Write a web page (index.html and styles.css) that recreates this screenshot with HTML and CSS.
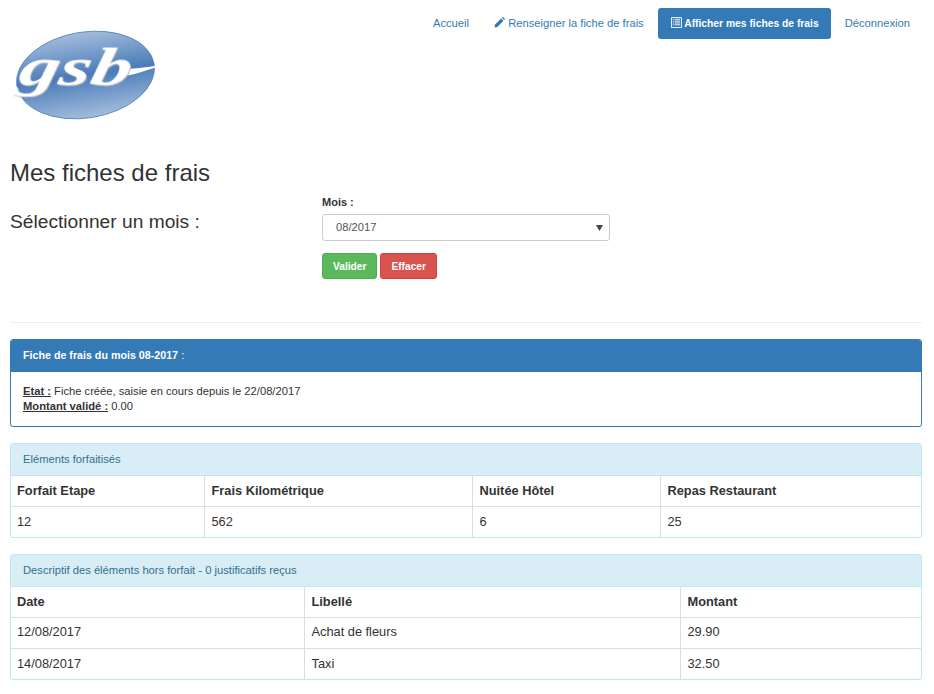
FILE: index.html
```html
<!DOCTYPE html>
<html lang="fr">

<head>
    <meta charset="UTF-8">
    <title>Mes fiches de frais</title>
    <link rel="stylesheet" href="styles.css">
</head>

<body>
    <div class="container">
        <div class="header">
            <ul class="nav-pills">
                <li><a href="#">Accueil</a></li>
                <li>
                    <a href="#">
                        <svg class="icon" viewBox="0 0 12 12">
                            <path d="M0.5 11.5l0.7-3.2 6.6-6.6 2.5 2.5-6.6 6.6z" fill="currentColor" />
                            <path d="M8.6 0.9l0.7-0.6c0.3-0.2 0.6-0.2 0.9 0l1.5 1.5c0.2 0.3 0.2 0.6 0 0.9l-0.6 0.7z" fill="currentColor" />
                        </svg>
                        Renseigner la fiche de frais
                    </a>
                </li>
                <li class="active">
                    <a href="#">
                        <svg class="icon" viewBox="0 0 12 12">
                            <path d="M0.5 0.5h11v11h-11z" fill="none" stroke="currentColor" />
                            <path d="M2 2.5h1.2M4 2.5h6M2 4.5h1.2M4 4.5h6M2 6.5h1.2M4 6.5h6M2 8.5h1.2M4 8.5h6" stroke="currentColor" />
                        </svg>
                        Afficher mes fiches de frais
                    </a>
                </li>
                <li><a href="#">Déconnexion</a></li>
            </ul>
            <svg class="logo" viewBox="0 0 146 94">
                <defs>
                    <linearGradient id="ovale" x1="0" y1="0" x2="0" y2="1">
                        <stop offset="0" stop-color="#a3bcdc" />
                        <stop offset="0.5" stop-color="#4a7cb9" />
                        <stop offset="1" stop-color="#a3bcdc" />
                    </linearGradient>
                </defs>
                <ellipse cx="72.5" cy="48" rx="69.5" ry="43" fill="url(#ovale)" stroke="#4f7fb8" stroke-width="0.8" transform="rotate(-9 72.5 48)" />
                <path class="logo-swoosh" d="M108 49c12 0 24-6 37-9l-3-1c-10 1-21 3-34 3z" />
                <text class="logo-text" x="16" y="58" textLength="112" lengthAdjust="spacingAndGlyphs" transform="skewX(-12)">gsb</text>
            </svg>
        </div>

        <h2 class="page-title">Mes fiches de frais</h2>

        <div class="select-row">
            <h3>Sélectionner un mois :</h3>
            <form class="month-form">
                <label for="lstMois">Mois :</label>
                <select id="lstMois">
                    <option>08/2017</option>
                </select>
                <div class="actions">
                    <button type="button" class="btn btn-success">Valider</button>
                    <button type="button" class="btn btn-danger">Effacer</button>
                </div>
            </form>
        </div>

        <hr>

        <div class="panel panel-primary">
            <div class="panel-heading"><b>Fiche de frais du mois 08-2017</b> :</div>
            <div class="panel-body">
                <p><u><b>Etat :</b></u> Fiche créée, saisie en cours depuis le 22/08/2017</p>
                <p><u><b>Montant validé :</b></u> 0.00</p>
            </div>
        </div>

        <div class="panel panel-info">
            <div class="panel-heading">Eléments forfaitisés</div>
            <table class="table">
                <colgroup>
                    <col class="w194">
                    <col class="w268">
                    <col class="w188">
                    <col>
                </colgroup>
                <tr>
                    <th>Forfait Etape</th>
                    <th>Frais Kilométrique</th>
                    <th>Nuitée Hôtel</th>
                    <th>Repas Restaurant</th>
                </tr>
                <tr>
                    <td>12</td>
                    <td>562</td>
                    <td>6</td>
                    <td>25</td>
                </tr>
            </table>
        </div>

        <div class="panel panel-info">
            <div class="panel-heading">Descriptif des éléments hors forfait - 0 justificatifs reçus</div>
            <table class="table">
                <colgroup>
                    <col class="w294">
                    <col class="w376">
                    <col>
                </colgroup>
                <tr>
                    <th>Date</th>
                    <th>Libellé</th>
                    <th>Montant</th>
                </tr>
                <tr>
                    <td>12/08/2017</td>
                    <td>Achat de fleurs</td>
                    <td>29.90</td>
                </tr>
                <tr>
                    <td>14/08/2017</td>
                    <td>Taxi</td>
                    <td>32.50</td>
                </tr>
            </table>
        </div>
    </div>
</body>

</html>
```
FILE: styles.css
```css
* {
    margin: 0;
    padding: 0;
    box-sizing: border-box;
}

body {
    font-family: 'Liberation Sans', Arial, sans-serif;
    font-size: 12px;
    line-height: 1.43;
    color: #333;
    background: #fff;
}

.container {
    margin: 0 12px 0 10px;
}

.header {
    height: 153px;
    padding-top: 8px;
}

.nav-pills {
    display: flex;
    justify-content: flex-end;
    gap: 2px;
    list-style: none;
    font-size: 11.2px;
}

.nav-pills a {
    display: block;
    height: 31px;
    padding: 0 12px;
    line-height: 31px;
    border-radius: 3px;
    color: #337ab7;
    text-decoration: none;
    white-space: nowrap;
}

.nav-pills li:first-child a {
    padding-right: 11px;
}

.nav-pills .active a {
    padding-left: 13px;
    background: #337ab7;
    color: #fff;
    font-size: 10.3px;
    font-weight: bold;
}

.icon {
    width: 11px;
    height: 11px;
    vertical-align: -1px;
}

.logo {
    display: block;
    width: 146px;
    height: 94px;
    margin: -12px 0 0 3px;
}

.logo-text {
    font-family: 'Liberation Serif', serif;
    font-size: 54px;
    font-style: italic;
    font-weight: bold;
    fill: #fff;
    filter: drop-shadow(1.5px 1.5px 0 #b5b8bd);
}

.logo-swoosh {
    fill: #fff;
}

.page-title {
    font-size: 24px;
    font-weight: 400;
    line-height: 28px;
    margin-top: 6px;
}

.select-row {
    display: flex;
    margin-top: 8px;
}

.select-row h3 {
    width: 312px;
    font-size: 19.2px;
    font-weight: 400;
    line-height: 20px;
    margin-top: 17px;
}

.month-form {
    width: 288px;
}

.month-form label {
    display: block;
    font-size: 11px;
    font-weight: bold;
    line-height: 14px;
    margin-bottom: 5px;
}

.month-form select {
    display: block;
    width: 100%;
    height: 27px;
    padding: 0 13px 2px;
    border: 1px solid #ccc;
    border-radius: 3px;
    background: #fff url("data:image/svg+xml,%3Csvg xmlns='http://www.w3.org/2000/svg' width='7' height='7'%3E%3Cpath d='M0 1h7L3.5 7z' fill='%23444'/%3E%3C/svg%3E") no-repeat right 6px center;
    appearance: none;
    color: #555;
    font-family: inherit;
    font-size: 11.2px;
}

.actions {
    display: flex;
    gap: 3px;
    margin-top: 12px;
}

.btn {
    height: 26px;
    padding: 0 10px;
    border: 1px solid transparent;
    border-radius: 3px;
    color: #fff;
    font-family: inherit;
    font-size: 10.2px;
    font-weight: bold;
}

.btn-success {
    background: #5cb85c;
    border-color: #4cae4c;
}

.btn-danger {
    background: #d9534f;
    border-color: #d43f3a;
}

hr {
    border: 0;
    border-top: 1px solid #eee;
    margin: 43px 0 16px;
}

.panel {
    border: 1px solid transparent;
    border-radius: 3px;
    margin-bottom: 16px;
    overflow: hidden;
    font-size: 11.2px;
}

.panel-heading {
    height: 32px;
    padding: 0 12px;
    line-height: 31px;
}

.panel-heading b {
    font-size: 10.7px;
}

.panel-primary {
    border-color: #337ab7;
}

.panel-primary .panel-heading {
    background: #337ab7;
    color: #fff;
}

.panel-body {
    padding: 12px;
    color: #333;
    line-height: 15px;
}

.panel-info {
    border-color: #bce8f1;
}

.panel-info .panel-heading {
    background: #d9edf7;
    border-bottom: 1px solid #bce8f1;
    color: #31708f;
}

.table {
    width: 100%;
    border-collapse: collapse;
    table-layout: fixed;
    font-size: 12.8px;
}

.table th,
.table td {
    height: 31px;
    padding: 0 6px 0 7px;
    text-align: left;
    border-left: 1px solid #ddd;
    border-top: 1px solid #ddd;
}

.table tr:first-child th {
    border-top: 0;
    height: 30px;
}

.table th:first-child,
.table td:first-child {
    padding-left: 6px;
    border-left: 0;
}

.w194 {
    width: 193px;
}

.w268 {
    width: 268px;
}

.w188 {
    width: 188px;
}

.w294 {
    width: 293px;
}

.w376 {
    width: 376px;
}
```
